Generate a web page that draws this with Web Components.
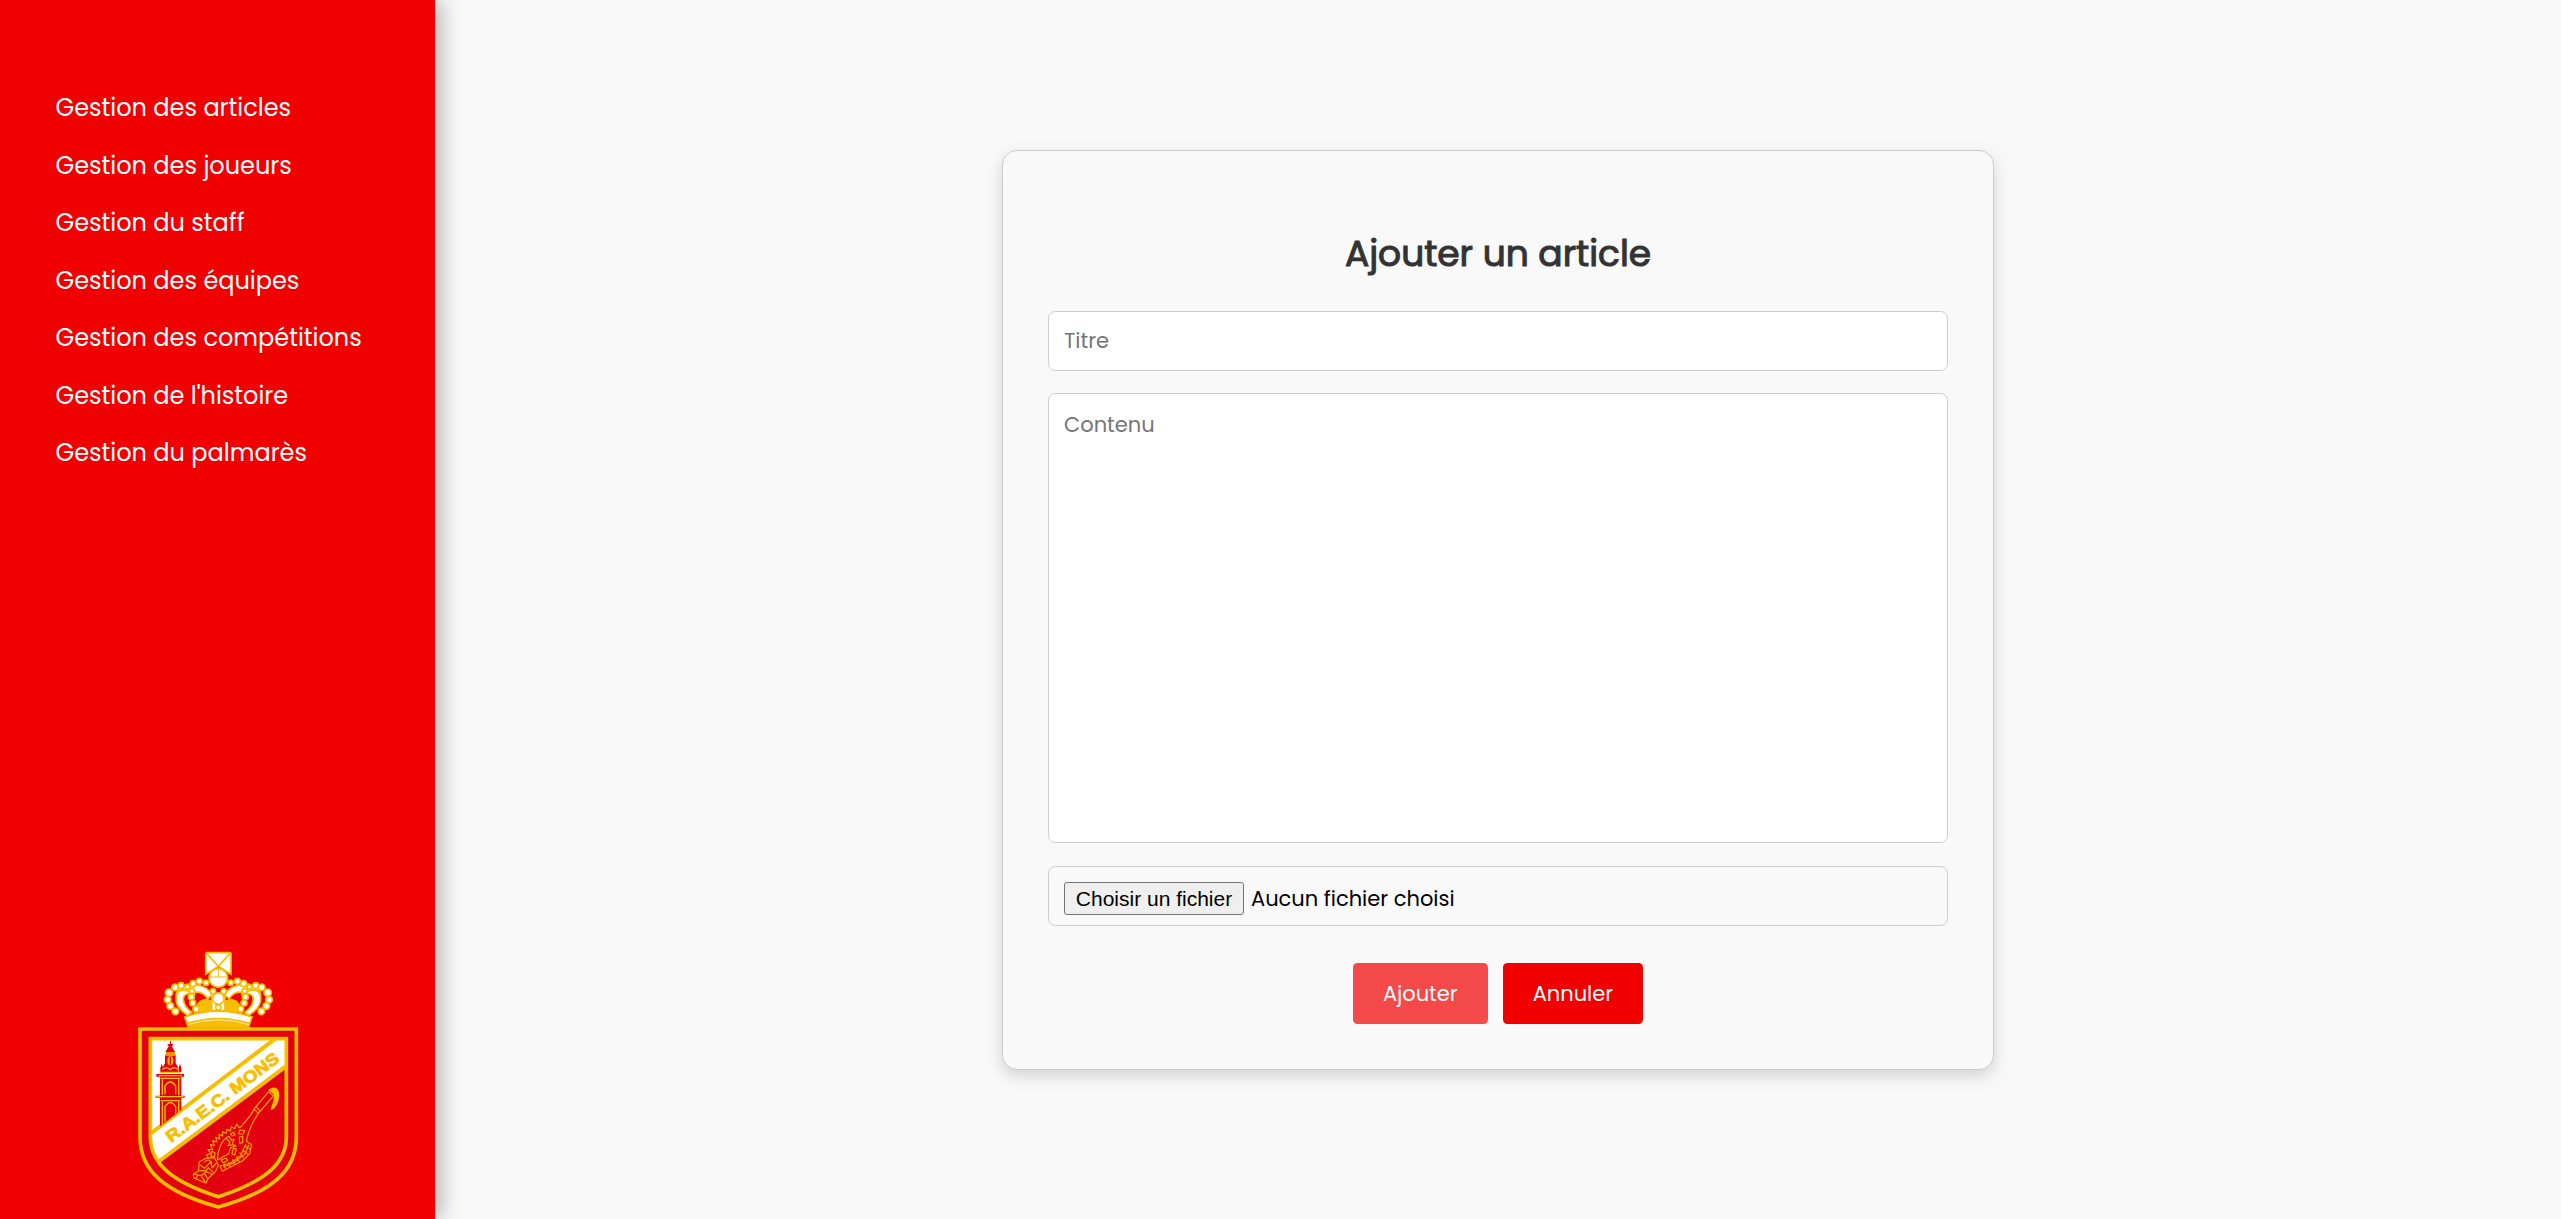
<!DOCTYPE html>
<html lang="fr">
<head>
<meta charset="utf-8">
<title>Ajouter un article</title>
<style>
  body { margin: 0; background: #f8f8f8; font-family: Poppins, Inter, "Open Sans", sans-serif; }
</style>
</head>
<body>
<admin-layout>
  <admin-sidebar slot="sidebar">
    <nav-item>Gestion des articles</nav-item>
    <nav-item>Gestion des joueurs</nav-item>
    <nav-item>Gestion du staff</nav-item>
    <nav-item>Gestion des équipes</nav-item>
    <nav-item>Gestion des compétitions</nav-item>
    <nav-item>Gestion de l'histoire</nav-item>
    <nav-item>Gestion du palmarès</nav-item>
    <club-crest slot="crest"></club-crest>
  </admin-sidebar>
  <article-card>
    <span slot="title">Ajouter un article</span>
    <form-field>Titre</form-field>
    <form-field kind="area">Contenu</form-field>
    <file-field><span slot="button">Choisir un fichier</span>Aucun fichier choisi</file-field>
    <action-button slot="actions" tone="light">Ajouter</action-button>
    <action-button slot="actions">Annuler</action-button>
  </article-card>
</admin-layout>
<script>
const define = (name, html) => customElements.define(name, class extends HTMLElement {
  constructor() { super(); this.attachShadow({ mode: 'open' }).innerHTML = html; }
});

define('admin-layout', `<style>
  :host { display: flex; height: 1219px; overflow: hidden; }
  main { flex: 1; display: flex; justify-content: center; align-items: flex-start; padding-top: 150px; }
</style><slot name="sidebar"></slot><main><slot></slot></main>`);

define('admin-sidebar', `<style>
  :host { display: flex; flex-direction: column; justify-content: space-between; width: 435px; box-sizing: border-box;
    background: #f10000; color: #fff; box-shadow: 5px 0 20px rgba(0,0,0,.3); }
  nav { display: flex; flex-direction: column; padding: 79.3px 0 0 55.5px; }
</style><nav><slot></slot></nav><slot name="crest"></slot>`);

define('nav-item', `<style>
  :host { display: block; height: 57.5px; line-height: 57.5px; font-size: 24px; white-space: nowrap; }
  a { color: inherit; text-decoration: none; }
</style><a href="#"><slot></slot></a>`);

define('article-card', `<style>
  :host { display: flex; flex-direction: column; box-sizing: border-box; width: 992px; height: 920px; padding: 75.5px 45px 0;
    border: 1px solid #ccc; border-radius: 15px; background: #f9f9f9; box-shadow: 0 6px 15px rgba(0,0,0,.15); }
  h1 { margin: 0 0 30.5px; height: 54px; line-height: 54px; font-size: 36px; font-weight: 400; -webkit-text-stroke: 1.1px #333; color: #333; text-align: center; }
  form { display: flex; flex-direction: column; }
  .actions { display: flex; justify-content: center; gap: 15px; margin-top: 37px; }
</style><h1><slot name="title"></slot></h1><form><slot></slot><div class="actions"><slot name="actions"></slot></div></form>`);

define('form-field', `<style>
  :host { display: block; box-sizing: border-box; height: 60px; margin-bottom: 22px; padding: 0 15px; border: 1px solid #ccc;
    border-radius: 7.5px; background: #fff; color: #757575; font-size: 21px; line-height: 57px; }
  :host([kind=area]) { height: 450px; margin-bottom: 23px; line-height: 61px; }
</style><slot></slot>`);

define('file-field', `<style>
  :host { display: flex; align-items: center; gap: 7px; box-sizing: border-box; height: 60px; padding: 5px 15px 0; border: 1px solid #ccc;
    border-radius: 7.5px; color: #000; font-size: 21px; line-height: 32px; }
  button { box-sizing: border-box; width: 180px; height: 33px; padding: 0 0 1px; border: 1px solid #767676; border-radius: 3px;
    background: #efefef; color: #000; font: 21px/29px "Liberation Sans", Arial, sans-serif; }
</style><button type="button"><slot name="button"></slot></button><span><slot></slot></span>`);

define('action-button', `<style>
  :host { display: block; padding: 0 30px; height: 61px; line-height: 61px; border-radius: 4.5px; background: #f10000; color: #fff; font-size: 21px; text-align: center; }
  :host([tone=light]) { opacity: .7; }
</style><slot></slot>`);

/* Club crest: crown, shield, belfry, diagonal banner and dragon */
const G = '#f7be00', R = '#e3000f';
const pearl = (x, y, r) => [x, 590 - x].map(cx => `<circle cx="${cx}" cy="${y}" r="${r}"/>`).join('');
const halfCrown = `
  <path d="M203 226 C178 210 162 188 170 162 C182 140 210 146 226 164 C208 157 190 161 190 178 C192 196 202 208 216 217 Z"/>
  <path d="M170 158 C178 134 210 128 232 135 C254 139 270 150 276 165 L262 177 C250 153 226 154 214 160 C198 146 182 148 170 158 Z"/>`;
define('club-crest', `<style>:host { display: block; margin-left: 120px; height: 279px; } svg { display: block; }</style>
<svg width="200" height="279" viewBox="0 0 600 837" role="img" aria-label="R.A.E.C. Mons">
  <defs>
    <clipPath id="inner"><path d="M91 296 H499 V590 C499 670 435 725 295 770 C155 725 91 670 91 590 Z"/></clipPath>
    <clipPath id="above"><path d="M91 296 H460 L91 581 Z"/></clipPath>
  </defs>
  <path d="M60 267 H529 V590 C529 690 460 755 295 801 C130 755 60 690 60 590 Z" fill="${R}" stroke="${G}" stroke-width="11"/>
  <g clip-path="url(#inner)">
    <path d="M91 296 H499 V377 L121 661 L91 640 Z" fill="#fff"/>
    <path d="M91 581 L466 296" stroke="${G}" stroke-width="12"/>
    <path d="M110 669 L510 370" stroke="${G}" stroke-width="12"/>
  </g>
  <g clip-path="url(#above)">
    <g fill="${R}">
      <path d="M150 303 h3 v9 h6 v5 h-4 l10 19 h-1 v8 h3 v26 l8 13 v15 h-48 v-15 l8 -13 v-26 h3 v-8 h-2 l11 -19 h-4 v-5 h7z"/>
      <path d="M125 371 l4 13 v12 h-8 v-12z M180 371 l4 13 v12 h-8 v-12z"/>
      <path d="M109 402 H192 V410 H184 V467 H194 V473 H184 V560 H120 V473 H107 V467 H120 V410 H109Z"/>
    </g>
    <g fill="none" stroke="${G}" stroke-width="4">
      <path d="M138 339 h27 M136 345 h31 M127 389 q12 -12 24 0 q12 -12 24 0 M120 397 h61 M116 407 h70 M121 415 h60 M109 470 h82 M122 482 h59"/>
      <path d="M127 418 v47 M176 418 v47 M127 485 v70 M176 485 v70"/>
      <path d="M135 463 v-25 q16 -24 32 0 v25 M135 545 v-45 q16 -24 32 0 v45"/>
    </g>
    <ellipse cx="151" cy="362" rx="9" ry="14" fill="${G}"/><path d="M151 350 v24" stroke="${R}" stroke-width="4"/>
  </g>
  <text transform="translate(153 609) rotate(-36.9)" textLength="411" lengthAdjust="spacingAndGlyphs" font-family="Liberation Sans, Arial, sans-serif" font-weight="700" font-size="50" fill="${G}" stroke="${G}" stroke-width="2.5">R.A.E.C. MONS</text>
  <path d="M91 296 H499 V590 C499 670 435 725 295 770 C155 725 91 670 91 590 Z" fill="none" stroke="${G}" stroke-width="11"/>

  <g fill="none" stroke="#f4a300" stroke-width="3.5" stroke-linejoin="round">
    <path d="M367 555 C385 535 398 520 402 507 L446 455 M379 604 C386 570 398 545 415 520 L460 468 M402 507 l13 13 M408 500 l12 13 M446 455 l14 13"/>
    <path d="M367 557 L358 563 L350 552 L344 566 L334 560 L331 573 L321 568 L318 580 L308 575 L308 588 L297 583 L299 597 L288 592 L290 606 L278 602 L283 617 L271 614 L278 629 L264 629 L272 641 L259 645 L266 654"/>
    <path d="M379 604 l16 10 l-6 27 l-22 22 l-34 17 l-26 14 l-7 -16 l32 -9 l30 -22 l16 -35 M316 686 l-4 -14 M330 681 l-5 -15 M344 673 l-7 -15 M358 665 l-9 -16 M371 653 l-12 -15 M383 642 l-16 -12 M391 627 l-18 -10 M309 681 l32 -12 l33 -26 l13 -29"/>
    <path d="M292 660 C293 630 304 600 327 589 l8 12 l7 -3 l-5 15 l11 5 l-16 5 l-6 18 C318 646 302 654 292 660 M318 594 l12 13 l-6 10 l16 -3"/>
    <path d="M359 570 l15 2 l-5 10 l-13 0z M332 581 l9 -4 l4 8 l-9 3z M358 591 l10 -2 v18 l-9 3z M340 625 l9 2 l-5 18 l-8 -3z M303 660 l15 -6 l5 7 l-12 8z M276 634 l9 4 l-2 13 l-10 -2z"/>
    <path d="M258 655 l25 -2 l12 22 l-9 20 l-23 22 l-5 12 l-36 -15 l-2 -12 l15 -8 l3 -29z M240 675 l14 10 l18 -20 l4 19 l13 -15 M220 702 l23 5 l16 -12 l18 8 M245 710 l10 15 M233 706 l-5 10 M252 667 q16 -16 24 4 M238 692 l20 0 l8 -10 M263 716 l-10 -16 M280 697 l-16 -15"/>
  </g>
  <path d="M444 451 C463 432 482 446 477 472 C475 491 467 504 454 511 C451 500 459 493 461 478 C462 469 461 464 458 460 Z" fill="${G}"/>

  <path d="M222 220 Q228 176 260 176 L295 188 L330 176 Q362 176 368 220 Q295 203 222 220Z" fill="${G}"/>
  <g fill="#fff" stroke="${G}" stroke-width="5">
    <g>${halfCrown}</g><g transform="translate(590 0) scale(-1 1)">${halfCrown}</g>
    <path d="M275 160 h40 v52 h-40z"/>
    <path d="M194 231 Q295 196 396 231 L386 259 Q295 228 204 259 Z"/>
    <path d="M203 263 L202 247 Q295 219 388 247 L387 263 Z" fill="${G}" stroke="none"/>
    <path d="M202 254 Q295 225 388 254" fill="none" stroke="#fff" stroke-width="2"/>
    <g stroke-width="5">
      ${pearl(258,128,8)}${pearl(238,124,9)}${pearl(219,131,9)}${pearl(202,140,7)}${pearl(183,137,9)}${pearl(165,142,10)}${pearl(147,158,11)}${pearl(143,179,10)}${pearl(151,198,10)}${pearl(166,214,10)}
      ${pearl(216,153,8)}${pearl(214,171,9)}${pearl(218,189,9)}${pearl(228,207,9)}${pearl(279,154,8)}
      <circle cx="295" cy="176" r="17"/><circle cx="295" cy="202" r="8"/>
    </g>
    <circle cx="295" cy="114" r="28"/>
    <path d="M267 111 H323 M295 86 V111" stroke-width="3"/>
    <path d="M257 40 L260 38 H330 L333 40 V103 L295 79 L257 103 Z" stroke-width="5"/>
    <path d="M260 40 L295 79 L330 40" fill="none"/>
  </g>
</svg>`);
</script>
</body>
</html>
